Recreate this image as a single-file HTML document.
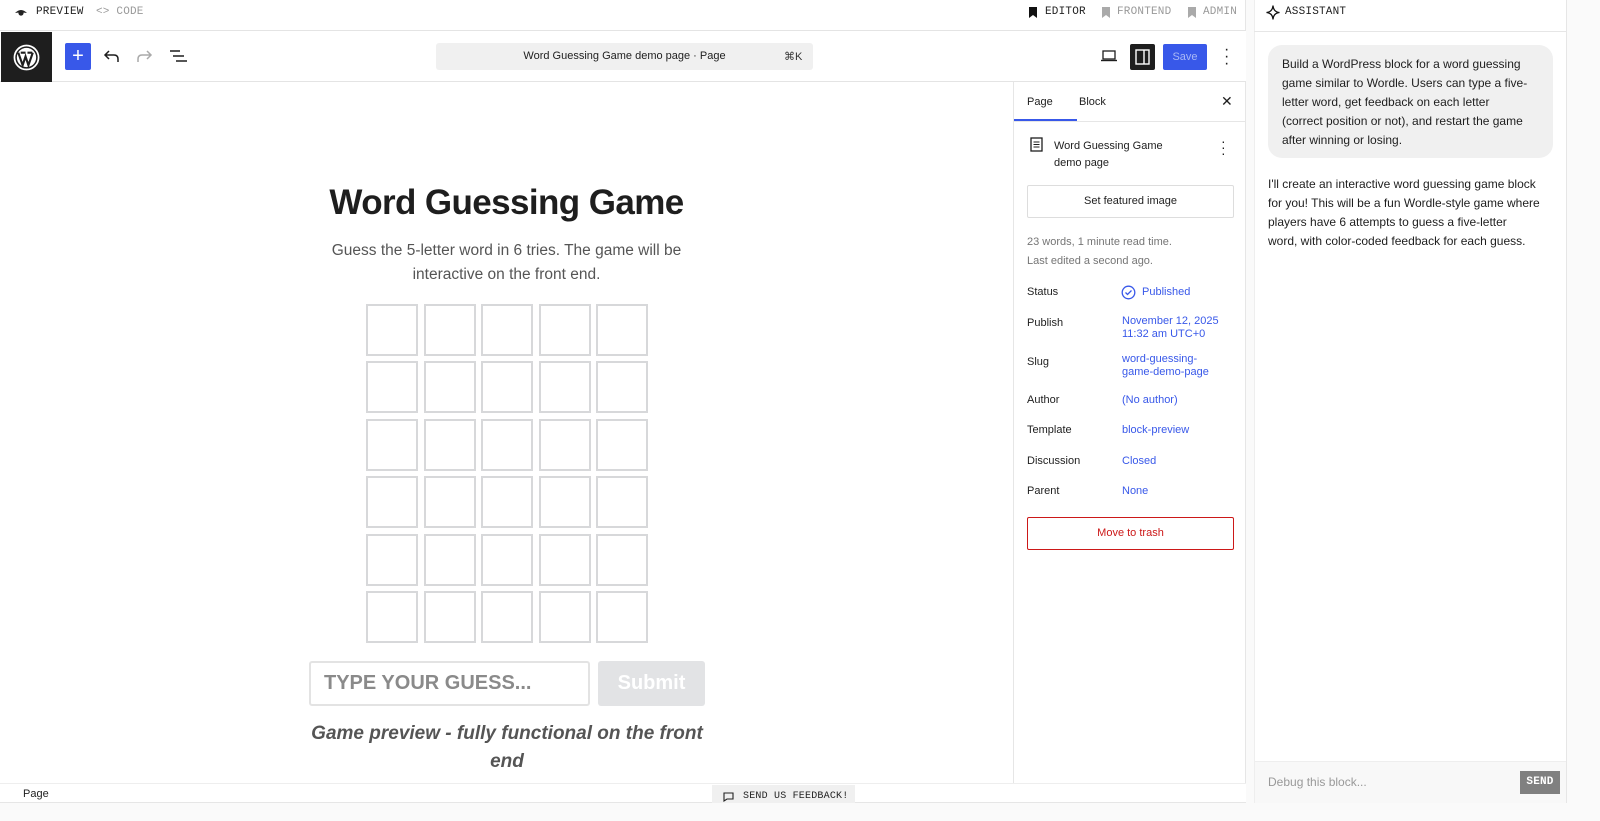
<!DOCTYPE html>
<html><head><meta charset="utf-8"><style>
*{box-sizing:border-box;margin:0;padding:0}
body{width:1600px;height:821px;overflow:hidden;background:#fafafa;font-family:"Liberation Sans",sans-serif;position:relative;color:#1e1e1e}
.a{position:absolute}
.mono{font-family:"Liberation Mono",monospace;letter-spacing:0.2px}
.cell{position:absolute;width:52px;height:52px;border:2px solid #d7d8da;background:#fff}
.lbl{position:absolute;left:1027px;font-size:11px;color:#1e1e1e}
.val{position:absolute;left:1122px;font-size:11px;color:#3858e9;line-height:13px}
</style></head><body>
<div class="a" style="left:0;top:0;width:1246px;height:803px;background:#fff;border-right:1px solid #e6e6e6"></div>
<div class="a" style="left:0;top:0;width:1246px;height:31px;border-bottom:1px solid #e4e4e4"></div>
<svg class="a" style="left:14px;top:7px" width="14" height="12" viewBox="0 0 14 12"><path d="M1 6 Q7 0 13 6 Q7 5 1 6Z" fill="#222"/><circle cx="7" cy="6" r="2.6" fill="#222"/></svg>
<div class="a mono" style="left:36px;top:6px;font-size:11px;color:#222">PREVIEW</div>
<div class="a mono" style="left:96px;top:6px;font-size:11px;color:#999">&lt;&gt; CODE</div>
<svg class="a" style="left:1028px;top:7px" width="10" height="11"><path d="M1 0h8v11l-4-3-4 3z" fill="#111"/></svg>
<div class="a mono" style="left:1045px;top:6px;font-size:11px;color:#222">EDITOR</div>
<svg class="a" style="left:1101px;top:7px" width="10" height="11"><path d="M1 0h8v11l-4-3-4 3z" fill="#aaa"/></svg>
<div class="a mono" style="left:1117px;top:6px;font-size:11px;color:#999">FRONTEND</div>
<svg class="a" style="left:1187px;top:7px" width="10" height="11"><path d="M1 0h8v11l-4-3-4 3z" fill="#aaa"/></svg>
<div class="a mono" style="left:1203px;top:6px;font-size:11px;color:#999">ADMIN</div>
<div class="a" style="left:0;top:31px;width:1246px;height:51px;background:#fff;border-bottom:1px solid #e4e4e4"></div>
<div class="a" style="left:1px;top:32px;width:51px;height:50px;background:#1e1e1e"></div>
<svg class="a" style="left:13px;top:44px" width="27" height="27" viewBox="0 0 28 28"><circle cx="14" cy="14" r="12.5" fill="none" stroke="#fff" stroke-width="1.8"/><circle cx="14" cy="14" r="10" fill="#fff"/><path d="M5.5 9 L10 22 L13 13 L16 22 L20.5 9 M8 9h5 M15 9h5" stroke="#1e1e1e" stroke-width="2.2" fill="none"/></svg>
<div class="a" style="left:65px;top:43px;width:26px;height:27px;background:#3858e9;border-radius:2px;color:#fff;font-size:20px;text-align:center;line-height:26px">+</div>
<svg class="a" style="left:103px;top:49px" width="16" height="14"><path d="M6 2 L2 6 L6 10 M2 6 H11 Q15 6 15 10 V13" stroke="#1e1e1e" stroke-width="1.5" fill="none"/></svg>
<svg class="a" style="left:137px;top:49px" width="16" height="14"><path d="M10 2 L14 6 L10 10 M14 6 H5 Q1 6 1 10 V13" stroke="#aaa" stroke-width="1.5" fill="none"/></svg>
<svg class="a" style="left:170px;top:50px" width="17" height="13"><path d="M0 1h10M3 6h11M6 11h11" stroke="#1e1e1e" stroke-width="1.5"/></svg>
<div class="a" style="left:436px;top:43px;width:377px;height:27px;background:#f0f0f0;border-radius:3px"></div>
<div class="a" style="left:436px;top:50px;width:377px;text-align:center;font-size:11px;color:#1e1e1e">Word Guessing Game demo page · Page</div>
<div class="a" style="left:784px;top:50px;font-size:11px;color:#333">⌘K</div>
<svg class="a" style="left:1101px;top:50px" width="16" height="12"><rect x="2" y="1" width="12" height="8" fill="none" stroke="#1e1e1e" stroke-width="1.3"/><path d="M0 10.5h16" stroke="#1e1e1e" stroke-width="1.4"/></svg>
<div class="a" style="left:1130px;top:44px;width:25px;height:26px;background:#1e1e1e;border-radius:2px"></div>
<svg class="a" style="left:1135px;top:49px" width="15" height="16"><rect x="1" y="1" width="13" height="14" fill="none" stroke="#fff" stroke-width="1.4"/><path d="M9 1v14" stroke="#fff" stroke-width="1.4"/></svg>
<div class="a" style="left:1163px;top:44px;width:44px;height:26px;background:#3858e9;border-radius:2px;color:#a9b8f5;font-size:11px;text-align:center;line-height:26px">Save</div>
<div class="a" style="left:1224px;top:46px;font-size:16px;line-height:7px;color:#1e1e1e;width:4px">·<br>·<br>·</div>
<div class="a" style="left:0;top:183px;width:1013px;text-align:center;font-size:35px;font-weight:bold;color:#1e1e1e;letter-spacing:-0.6px">Word Guessing Game</div>
<div class="a" style="left:0;top:239px;width:1013px;text-align:center;font-size:15.5px;line-height:24px;color:#555">Guess the 5-letter word in 6 tries. The game will be<br>interactive on the front end.</div>
<div id="grid"></div>
<div class="a" style="left:309px;top:661px;width:281px;height:45px;border:2px solid #e3e3e3;border-radius:3px;background:#fff"></div>
<div class="a" style="left:324px;top:672px;font-size:20px;font-weight:bold;color:#8a8a8a">TYPE YOUR GUESS...</div>
<div class="a" style="left:598px;top:661px;width:107px;height:45px;background:#e2e3e5;border-radius:3px;color:#fff;font-size:20px;font-weight:bold;text-align:center;line-height:45px">Submit</div>
<div class="a" style="left:300px;top:720px;width:414px;text-align:center;font-size:19px;line-height:28px;font-weight:bold;font-style:italic;color:#555">Game preview - fully functional on the front end</div>
<div class="a" style="left:1013px;top:82px;width:1px;height:701px;background:#e6e6e6"></div>
<div class="a" style="left:1014px;top:121px;width:232px;height:1px;background:#e6e6e6"></div>
<div class="a" style="left:1014px;top:119px;width:63px;height:2px;background:#3858e9"></div>
<div class="a" style="left:1027px;top:96px;font-size:11px">Page</div>
<div class="a" style="left:1079px;top:96px;font-size:11px">Block</div>
<div class="a" style="left:1221px;top:93px;font-size:14px">✕</div>
<svg class="a" style="left:1030px;top:137px" width="13" height="15"><rect x="1" y="1" width="11" height="13" fill="none" stroke="#1e1e1e" stroke-width="1.3"/><path d="M3.5 5h6M3.5 7.5h6M3.5 10h6" stroke="#1e1e1e" stroke-width="1.1"/></svg>
<div class="a" style="left:1054px;top:138px;font-size:11px;line-height:17px">Word Guessing Game<br>demo page</div>
<div class="a" style="left:1221px;top:138px;font-size:14px;line-height:6px">·<br>·<br>·</div>
<div class="a" style="left:1027px;top:185px;width:207px;height:33px;border:1px solid #ddd;border-radius:2px;font-size:11px;text-align:center;line-height:31px">Set featured image</div>
<div class="a" style="left:1027px;top:233px;font-size:11px;line-height:19px;color:#757575">23 words, 1 minute read time.<br>Last edited a second ago.</div>
<div class="lbl" style="top:286px">Status</div>
<svg class="a" style="left:1121px;top:285px" width="15" height="15"><circle cx="7.5" cy="7.5" r="6.3" fill="none" stroke="#3858e9" stroke-width="1.3"/><path d="M4.5 7.5l2 2 4-4" stroke="#3858e9" stroke-width="1.3" fill="none"/></svg>
<div class="val" style="top:286px;left:1142px">Published</div>
<div class="lbl" style="top:317px">Publish</div>
<div class="val" style="top:315px">November 12, 2025<br>11:32 am UTC+0</div>
<div class="lbl" style="top:356px">Slug</div>
<div class="val" style="top:353px">word-guessing-<br>game-demo-page</div>
<div class="lbl" style="top:394px">Author</div>
<div class="val" style="top:394px">(No author)</div>
<div class="lbl" style="top:424px">Template</div>
<div class="val" style="top:424px">block-preview</div>
<div class="lbl" style="top:455px">Discussion</div>
<div class="val" style="top:455px">Closed</div>
<div class="lbl" style="top:485px">Parent</div>
<div class="val" style="top:485px">None</div>
<div class="a" style="left:1027px;top:517px;width:207px;height:33px;border:1px solid #cc1818;border-radius:2px;font-size:11px;color:#cc1818;text-align:center;line-height:31px">Move to trash</div>
<div class="a" style="left:0;top:783px;width:1246px;height:20px;background:#fff;border-top:1px solid #eee;border-bottom:1px solid #e6e6e6"></div>
<div class="a" style="left:23px;top:788px;font-size:11px">Page</div>
<div class="a" style="left:712px;top:785px;width:143px;height:18px;background:#f0f0f0"></div>
<svg class="a" style="left:723px;top:792px" width="11" height="10"><path d="M1 1h9v6H4l-3 2z" fill="none" stroke="#222" stroke-width="1.1"/></svg>
<div class="a mono" style="left:743px;top:791px;font-size:10px;color:#222">SEND US FEEDBACK!</div>
<div class="a" style="left:1254px;top:0;width:313px;height:803px;background:#fff;border-left:1px solid #eee;border-right:1px solid #e6e6e6"></div>
<div class="a" style="left:1254px;top:31px;width:313px;height:1px;background:#e6e6e6"></div>
<svg class="a" style="left:1266px;top:5px" width="14" height="15"><path d="M7 0.5 Q7.5 7 13.5 7.5 Q7.5 8 7 14.5 Q6.5 8 0.5 7.5 Q6.5 7 7 0.5Z" fill="none" stroke="#111" stroke-width="1.3"/></svg>
<div class="a mono" style="left:1285px;top:6px;font-size:11px;color:#222">ASSISTANT</div>
<div class="a" style="left:1268px;top:45px;width:285px;height:113px;background:#f0f0f0;border-radius:14px"></div>
<div class="a" style="left:1282px;top:55px;white-space:nowrap;font-size:12px;line-height:19px;color:#1e1e1e">Build a WordPress block for a word guessing<br>game similar to Wordle. Users can type a five-<br>letter word, get feedback on each letter<br>(correct position or not), and restart the game<br>after winning or losing.</div>
<div class="a" style="left:1268px;top:175px;white-space:nowrap;font-size:12px;line-height:19px;color:#1e1e1e">I'll create an interactive word guessing game block<br>for you! This will be a fun Wordle-style game where<br>players have 6 attempts to guess a five-letter<br>word, with color-coded feedback for each guess.</div>
<div class="a" style="left:1255px;top:761px;width:311px;height:42px;background:#f8f8f8;border-top:1px solid #eee"></div>
<div class="a" style="left:1268px;top:775px;font-size:12px;color:#999">Debug this block...</div>
<div class="a mono" style="left:1520px;top:771px;width:40px;height:23px;background:#808080;color:#fff;font-size:11px;font-weight:bold;text-align:center;line-height:23px">SEND</div>
<script>
var g=document.getElementById('grid'),xs=[366,424,481,539,596],ys=[304,361,419,476,534,591],h='';
ys.forEach(function(y){xs.forEach(function(x){h+='<div class="cell" style="left:'+x+'px;top:'+y+'px"></div>'})});
g.innerHTML=h;
</script>
</body></html>
